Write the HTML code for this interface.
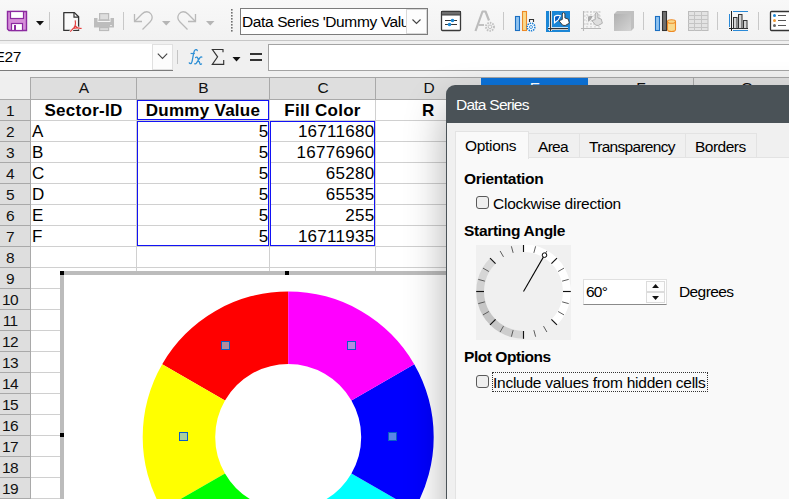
<!DOCTYPE html>
<html><head><meta charset="utf-8">
<style>
*{box-sizing:border-box;margin:0;padding:0}
html,body{width:789px;height:499px;overflow:hidden;background:#f0f0f0;font-family:"Liberation Sans",sans-serif;color:#000;position:relative}
.a{position:absolute}
.t{position:absolute;white-space:nowrap}
</style></head><body>
<div class="a" style="left:0;top:0;width:789px;height:40px;background:linear-gradient(#f8f8f8,#f2f2f2)"></div>
<div class="a" style="left:0;top:40px;width:789px;height:1px;background:#c6c6c6"></div>
<div class="a" style="left:0;top:41px;width:789px;height:36px;background:#f0f0f0"></div>

<svg class="a" style="left:0;top:0" width="789" height="40" viewBox="0 0 789 40">
 <!-- save -->
 <path d="M7.5 11.5h19v19h-17.5l-1.5-1.5z" fill="#d68fd9" stroke="#8c2aa0" stroke-width="1.4"/>
 <rect x="10.5" y="11.5" width="13" height="7" fill="#fff" stroke="#8c2aa0" stroke-width="1.2"/>
 <rect x="11.5" y="23.5" width="11" height="7" fill="#fff" stroke="#8c2aa0" stroke-width="1.2"/>
 <rect x="14" y="25" width="2" height="5" fill="#8c2aa0"/>
 <path d="M36 21h8l-4 4.5z" fill="#111"/>
 <rect x="49" y="12" width="1" height="18" fill="#c8c8c8"/>
 <!-- pdf -->
 <path d="M63.8 12.6H74.4L78.6 16.8V30.4H63.8Z" fill="#fafafa" stroke="#333" stroke-width="1.3" stroke-linejoin="round"/>
 <path d="M74 12.6V17.2H78.6" fill="none" stroke="#333" stroke-width="1.2"/>
 <path d="M75.2 20.3C75.8 23.5 75.5 25.8 73.8 27.8L70.2 31.6M75.2 25.8C76.5 27.6 79 28.6 81.6 28.4M72.6 28.6C75 27.8 77.5 27.6 80.5 28.3" fill="none" stroke="#f4f4f4" stroke-width="2.6"/>
 <path d="M75.2 20.3C75.8 23.5 75.5 25.8 73.8 27.8L70.2 31.6M75.2 25.8C76.5 27.6 79 28.6 81.6 28.4M72.6 28.6C75 27.8 77.5 27.6 80.5 28.3" fill="none" stroke="#e53b3b" stroke-width="1.1"/>
 <!-- printer -->
 <path d="M94 18h3.5v4h13v-4h3.5v9.5h-20z" fill="#bdbdbd"/>
 <rect x="99.6" y="13.6" width="9" height="6.4" fill="#dedede" stroke="#bbb" stroke-width="1.2"/>
 <rect x="98.2" y="19.6" width="11.6" height="1.2" fill="#bbb"/>
 <rect x="99.6" y="27.6" width="9" height="2.9" fill="#dedede" stroke="#bbb" stroke-width="1.2"/>
 <rect x="110" y="25" width="2" height="1" fill="#e6e6e6"/>
 <rect x="123" y="12" width="1" height="18" fill="#c8c8c8"/>
 <!-- undo -->
 <path d="M134.5 14v7.5h7.5" fill="none" stroke="#b9b9b9" stroke-width="1.3"/>
 <path d="M134.8 21.2L142 14c3-3 7-3 9 0c2 3 1 6-1 8l-7.5 7.5" fill="none" stroke="#b9b9b9" stroke-width="1.3"/>
 <path d="M162 21h8.5l-4.25 4.5z" fill="#b5b5b5"/>
 <!-- redo -->
 <path d="M195.5 14v7.5h-7.5" fill="none" stroke="#b9b9b9" stroke-width="1.3"/>
 <path d="M195.2 21.2L188 14c-3-3-7-3-9 0c-2 3-1 6 1 8l7.5 7.5" fill="none" stroke="#b9b9b9" stroke-width="1.3"/>
 <path d="M206 21h8.5l-4.25 4.5z" fill="#b5b5b5"/>
 <!-- grip -->
 <g fill="#707070"><rect x="231" y="9" width="1.6" height="1.6"/><rect x="231" y="12" width="1.6" height="1.6"/><rect x="231" y="15" width="1.6" height="1.6"/><rect x="231" y="18" width="1.6" height="1.6"/><rect x="231" y="21" width="1.6" height="1.6"/><rect x="231" y="24" width="1.6" height="1.6"/><rect x="231" y="27" width="1.6" height="1.6"/><rect x="231" y="30" width="1.6" height="1.6"/></g>
 <!-- format selection -->
 <rect x="441.5" y="11.5" width="19" height="19" rx="1" fill="#fff" stroke="#3a3a3a" stroke-width="1.3"/>
 <rect x="441.5" y="11.5" width="19" height="3.5" fill="#6d6d6d" stroke="#3a3a3a" stroke-width="1"/>
 <path d="M445 20.5h12M445 24.5h12" stroke="#333" stroke-width="1.1"/>
 <circle cx="452.5" cy="20.5" r="1.8" fill="#1e8ad6"/>
 <circle cx="449.5" cy="24.5" r="1.8" fill="#1e8ad6"/>
 <!-- font A -->
 <path d="M475.5 31l7-19.5h3l3.5 9" fill="none" stroke="#bcbcbc" stroke-width="2.2" stroke-linejoin="round"/>
 <path d="M478.5 25h5.5" stroke="#bcbcbc" stroke-width="1.8"/>
 <circle cx="490" cy="26.8" r="4" fill="#f4f4f4" stroke="#c2c2c2" stroke-width="2" stroke-dasharray="1.5 1.1"/>
 <circle cx="490" cy="26.8" r="1.8" fill="none" stroke="#c2c2c2" stroke-width="1"/>
 <rect x="503" y="12" width="1" height="18" fill="#c8c8c8"/>
 <!-- chart type -->
 <rect x="515.5" y="16.5" width="4" height="14" fill="#8ec3f0" stroke="#1b6fc2" stroke-width="1.1"/>
 <rect x="522.5" y="11.5" width="4" height="19" fill="#f8d98c" stroke="#ee8a25" stroke-width="1.1"/>
 <path d="M529.5 22v-2.5h4v2.5" fill="none" stroke="#333" stroke-width="1.1"/>
 <circle cx="531" cy="27" r="3.8" fill="#fff" stroke="#1b7fd6" stroke-width="1.6" stroke-dasharray="1.4 0.9"/>
 <circle cx="531" cy="27" r="1.5" fill="none" stroke="#1b7fd6" stroke-width="0.8"/>
 <!-- chart wall selected -->
 <rect x="546" y="11" width="24" height="21" fill="#1b86d6"/>
 <path d="M550.6 11v20M548 28.6h20" stroke="#fff" stroke-width="2.8"/>
 <path d="M550.6 11v20M548 28.6h20" stroke="#333" stroke-width="1.1"/>
 <path d="M554.5 22.8v-6.3c1.5-1.2 4-1.3 6-.8l-2.5 4.5z" fill="#0a5cc0" stroke="#fff" stroke-width="1.1"/>
 <path d="M562.3 19.5v-5.5c0-1.8 2.6-1.8 2.6 0v4l3.3 1 1.2 4.2-4.2 2.3-2.5-.3-3.8-4.5z" fill="#fff" stroke="#333" stroke-width="0.9" stroke-linejoin="round"/>
 <!-- grid wall disabled -->
 <g stroke="#c6c6c6" stroke-width="1" fill="none" stroke-dasharray="1.6 1.4">
  <path d="M587 11v17M591 11v17M595 11v17M599 11v17M584 12h17M584 16h17M584 20h17M584 24h17"/>
 </g>
 <path d="M583.5 11v20M581 28.5h20" stroke="#b8b8b8" stroke-width="1.1"/>
 <path d="M587.5 22.8v-6.3c1.5-1.2 4-1.3 6-.8l-2.5 4.5z" fill="#ababab" stroke="#f2f2f2" stroke-width="1"/>
 <path d="M595.3 19.5v-5.5c0-1.8 2.6-1.8 2.6 0v4l3.3 1 1.2 4.2-4.2 2.3-2.5-.3-3.8-4.5z" fill="#dedede" stroke="#acacac" stroke-width="0.9" stroke-linejoin="round"/>
 <!-- 3d cube -->
 <path d="M614 14l3-3h17v17l-3 3h-17z" fill="#c0c0c0"/>
 <path d="M614 14h17v17h-17z" fill="url(#cubeg)"/>
 <defs><linearGradient id="cubeg" x1="0" y1="0" x2="1" y2="1"><stop offset="0" stop-color="#b0b0b0"/><stop offset="1" stop-color="#d4d4d4"/></linearGradient></defs>
 <rect x="643" y="12" width="1" height="18" fill="#c8c8c8"/>
 <!-- chart data -->
 <rect x="655.5" y="16.5" width="4" height="14" fill="#8ec3f0" stroke="#1b6fc2" stroke-width="1.1"/>
 <rect x="662.5" y="11.5" width="4" height="19" fill="#6f6f6f" stroke="#333" stroke-width="1.1"/>
 <path d="M667.5 21.5v8c0 1.2 2 2 4 2s4-.8 4-2v-8" fill="#f8d98c" stroke="#ee8a25" stroke-width="1.1"/>
 <ellipse cx="671.5" cy="21.5" rx="4" ry="1.8" fill="#f8d98c" stroke="#ee8a25" stroke-width="1.1"/>
 <!-- data table -->
 <rect x="688.5" y="11.5" width="19.5" height="19" fill="#e3e3e3" stroke="#bcbcbc" stroke-width="1"/>
 <path d="M688 15.5h20M688 19.5h20M688 23.5h20M688 27.5h20M694.5 11v20M701.5 11v20" stroke="#c4c4c4" stroke-width="1"/>
 <rect x="717" y="12" width="1" height="18" fill="#c8c8c8"/>
 <!-- axis -->
 <path d="M733 11.5h15M733 30.5h15M729.5 14v13" stroke="#2a8ad8" stroke-width="1"/>
 <path d="M731.5 11v20M729 28.5h19" stroke="#222" stroke-width="1"/>
 <rect x="733.5" y="17.5" width="3.5" height="11" fill="#d4d4d4" stroke="#333" stroke-width="1"/>
 <rect x="738.5" y="14.5" width="3.5" height="14" fill="#d4d4d4" stroke="#333" stroke-width="1"/>
 <rect x="743.5" y="20.5" width="3.5" height="8" fill="#d4d4d4" stroke="#333" stroke-width="1"/>
 <rect x="758" y="12" width="1" height="18" fill="#c8c8c8"/>
 <!-- legend -->
 <rect x="770.5" y="11.5" width="25" height="19" rx="1" fill="#fff" stroke="#333" stroke-width="1.3"/>
 <circle cx="774.5" cy="15.5" r="1.5" fill="#1e88d8"/><circle cx="774.5" cy="20.5" r="1.5" fill="#f39b35"/><circle cx="774.5" cy="25.5" r="1.5" fill="#666"/>
 <path d="M778 15.5h8M778 20.5h8M778 25.5h8" stroke="#555" stroke-width="1"/>
</svg>
<div class="a" style="left:240px;top:8px;width:188px;height:27px;background:#fff;border:1px solid #7c7c7c"></div>
<div class="t" style="left:242px;top:9px;width:164px;height:25px;overflow:hidden;font-size:15.5px;letter-spacing:-0.38px;line-height:25px">Data Series 'Dummy Values'</div>
<div class="a" style="left:406px;top:9px;width:21px;height:25px;background:#fdfdfd;border:1px solid #d8d8d8"></div>
<svg class="a" style="left:406px;top:9px" width="21" height="25"><path d="M6.5 10.5l4 4 4-4" fill="none" stroke="#444" stroke-width="1.1"/></svg>
<div class="a" style="left:-10px;top:44px;width:183px;height:27px;background:#fff;border-bottom:1px solid #7c7c7c"></div>
<div class="t" style="left:-5.5px;top:44px;font-size:15.5px;letter-spacing:-0.3px;line-height:26px">E27</div>
<div class="a" style="left:152px;top:44px;width:21px;height:26px;background:#fcfcfc;border:1px solid #e0e0e0"></div>
<svg class="a" style="left:152px;top:44px" width="21" height="26"><path d="M5.8 9.7l4.7 4.7 4.7-4.7" fill="none" stroke="#444" stroke-width="1.1"/></svg>
<div class="a" style="left:177px;top:50px;width:1px;height:14px;background:#c4c4c4"></div>
<svg class="a" style="left:184px;top:45px" width="44" height="24" viewBox="184 45 44 24"><path d="M197.3 50.6c-.3-.9-1.3-1.2-2-.8-.9.5-1.3 1.6-1.6 3.2l-1.6 8.4c-.3 1.5-.9 2.3-1.7 2.3-.6 0-.9-.4-1.1-.8" fill="none" stroke="#2d8fd5" stroke-width="1.3" stroke-linecap="round"/><path d="M190.6 53.5h4.2" stroke="#2d8fd5" stroke-width="1.2"/><path d="M195.6 57.5c.8-.6 1.6-.5 2 .3l2.3 5.8c.4.8 1 .9 1.6.4M201.8 57.1c-.6-.4-1.2-.2-1.8.5l-3.6 5.6c-.5.7-1 .9-1.6.6" fill="none" stroke="#2d8fd5" stroke-width="1.3" stroke-linecap="round"/><path d="M223 52.3v-2.8h-10.6l5.2 7.3-5.3 7.6h11.4v-4.5" fill="none" stroke="#333" stroke-width="1.15"/></svg>
<svg class="a" style="left:230px;top:50px" width="40" height="20"><path d="M2.5 7h8l-4 4.5z" fill="#111"/><path d="M20 4h12M20 10h12" stroke="#333" stroke-width="2"/></svg>
<div class="a" style="left:268px;top:44px;width:530px;height:27px;background:#fff;border:1px solid #a3a3a3"></div>
<div class="a" style="left:0;top:77px;width:789px;height:422px;background:#fff"></div>
<div class="a" style="left:30px;top:77px;width:789px;height:1px;background:#a5a5a5"></div>
<div class="a" style="left:0;top:77px;width:30px;height:1px;background:#efefef"></div>
<div class="a" style="left:0;top:78px;width:30px;height:21px;background:#efefef"></div>
<div class="a" style="left:31px;top:78px;width:105px;height:21px;background:#dedede"></div>
<div class="t" style="left:31px;top:77px;width:106px;text-align:center;font-size:15.5px;line-height:21px;color:#111">A</div>
<div class="a" style="left:137px;top:78px;width:132px;height:21px;background:#dedede"></div>
<div class="t" style="left:137px;top:77px;width:133px;text-align:center;font-size:15.5px;line-height:21px;color:#111">B</div>
<div class="a" style="left:270px;top:78px;width:105px;height:21px;background:#dedede"></div>
<div class="t" style="left:270px;top:77px;width:106px;text-align:center;font-size:15.5px;line-height:21px;color:#111">C</div>
<div class="a" style="left:376px;top:78px;width:105px;height:21px;background:#dedede"></div>
<div class="t" style="left:376px;top:77px;width:106px;text-align:center;font-size:15.5px;line-height:21px;color:#111">D</div>
<div class="a" style="left:481px;top:78px;width:107px;height:21px;background:#0c72d8"></div>
<div class="t" style="left:482px;top:77px;width:106px;text-align:center;font-size:15.5px;line-height:21px;color:#fff">E</div>
<div class="a" style="left:588px;top:78px;width:105px;height:21px;background:#dedede"></div>
<div class="t" style="left:588px;top:77px;width:106px;text-align:center;font-size:15.5px;line-height:21px;color:#111">F</div>
<div class="a" style="left:694px;top:78px;width:105px;height:21px;background:#dedede"></div>
<div class="t" style="left:694px;top:77px;width:106px;text-align:center;font-size:15.5px;line-height:21px;color:#111">G</div>
<div class="a" style="left:30px;top:78px;width:1px;height:21px;background:#a9a9a9"></div>
<div class="a" style="left:136px;top:78px;width:1px;height:21px;background:#a9a9a9"></div>
<div class="a" style="left:269px;top:78px;width:1px;height:21px;background:#a9a9a9"></div>
<div class="a" style="left:375px;top:78px;width:1px;height:21px;background:#a9a9a9"></div>
<div class="a" style="left:693px;top:78px;width:1px;height:21px;background:#a9a9a9"></div>
<div class="a" style="left:799px;top:78px;width:1px;height:21px;background:#a9a9a9"></div>
<div class="a" style="left:0;top:99px;width:789px;height:1px;background:#a9a9a9"></div>
<div class="a" style="left:0;top:100px;width:30px;height:20px;background:#dedede"></div>
<div class="t" style="left:-10px;top:101px;width:40px;text-align:center;font-size:15.5px;letter-spacing:-0.7px;line-height:20px;color:#111">1</div>
<div class="a" style="left:0;top:120px;width:30px;height:1px;background:#a9a9a9"></div>
<div class="a" style="left:31px;top:120px;width:760px;height:1px;background:#d0d0d0"></div>
<div class="a" style="left:0;top:121px;width:30px;height:20px;background:#dedede"></div>
<div class="t" style="left:-10px;top:122px;width:40px;text-align:center;font-size:15.5px;letter-spacing:-0.7px;line-height:20px;color:#111">2</div>
<div class="a" style="left:0;top:141px;width:30px;height:1px;background:#a9a9a9"></div>
<div class="a" style="left:31px;top:141px;width:760px;height:1px;background:#d0d0d0"></div>
<div class="a" style="left:0;top:142px;width:30px;height:20px;background:#dedede"></div>
<div class="t" style="left:-10px;top:143px;width:40px;text-align:center;font-size:15.5px;letter-spacing:-0.7px;line-height:20px;color:#111">3</div>
<div class="a" style="left:0;top:162px;width:30px;height:1px;background:#a9a9a9"></div>
<div class="a" style="left:31px;top:162px;width:760px;height:1px;background:#d0d0d0"></div>
<div class="a" style="left:0;top:163px;width:30px;height:20px;background:#dedede"></div>
<div class="t" style="left:-10px;top:164px;width:40px;text-align:center;font-size:15.5px;letter-spacing:-0.7px;line-height:20px;color:#111">4</div>
<div class="a" style="left:0;top:183px;width:30px;height:1px;background:#a9a9a9"></div>
<div class="a" style="left:31px;top:183px;width:760px;height:1px;background:#d0d0d0"></div>
<div class="a" style="left:0;top:184px;width:30px;height:20px;background:#dedede"></div>
<div class="t" style="left:-10px;top:185px;width:40px;text-align:center;font-size:15.5px;letter-spacing:-0.7px;line-height:20px;color:#111">5</div>
<div class="a" style="left:0;top:204px;width:30px;height:1px;background:#a9a9a9"></div>
<div class="a" style="left:31px;top:204px;width:760px;height:1px;background:#d0d0d0"></div>
<div class="a" style="left:0;top:205px;width:30px;height:20px;background:#dedede"></div>
<div class="t" style="left:-10px;top:206px;width:40px;text-align:center;font-size:15.5px;letter-spacing:-0.7px;line-height:20px;color:#111">6</div>
<div class="a" style="left:0;top:225px;width:30px;height:1px;background:#a9a9a9"></div>
<div class="a" style="left:31px;top:225px;width:760px;height:1px;background:#d0d0d0"></div>
<div class="a" style="left:0;top:226px;width:30px;height:20px;background:#dedede"></div>
<div class="t" style="left:-10px;top:227px;width:40px;text-align:center;font-size:15.5px;letter-spacing:-0.7px;line-height:20px;color:#111">7</div>
<div class="a" style="left:0;top:246px;width:30px;height:1px;background:#a9a9a9"></div>
<div class="a" style="left:31px;top:246px;width:760px;height:1px;background:#d0d0d0"></div>
<div class="a" style="left:0;top:247px;width:30px;height:20px;background:#dedede"></div>
<div class="t" style="left:-10px;top:248px;width:40px;text-align:center;font-size:15.5px;letter-spacing:-0.7px;line-height:20px;color:#111">8</div>
<div class="a" style="left:0;top:267px;width:30px;height:1px;background:#a9a9a9"></div>
<div class="a" style="left:31px;top:267px;width:760px;height:1px;background:#d0d0d0"></div>
<div class="a" style="left:0;top:268px;width:30px;height:20px;background:#dedede"></div>
<div class="t" style="left:-10px;top:269px;width:40px;text-align:center;font-size:15.5px;letter-spacing:-0.7px;line-height:20px;color:#111">9</div>
<div class="a" style="left:0;top:288px;width:30px;height:1px;background:#a9a9a9"></div>
<div class="a" style="left:31px;top:288px;width:760px;height:1px;background:#d0d0d0"></div>
<div class="a" style="left:0;top:289px;width:30px;height:20px;background:#dedede"></div>
<div class="t" style="left:-10px;top:290px;width:40px;text-align:center;font-size:15.5px;letter-spacing:-0.7px;line-height:20px;color:#111">10</div>
<div class="a" style="left:0;top:309px;width:30px;height:1px;background:#a9a9a9"></div>
<div class="a" style="left:31px;top:309px;width:760px;height:1px;background:#d0d0d0"></div>
<div class="a" style="left:0;top:310px;width:30px;height:20px;background:#dedede"></div>
<div class="t" style="left:-10px;top:311px;width:40px;text-align:center;font-size:15.5px;letter-spacing:-0.7px;line-height:20px;color:#111">11</div>
<div class="a" style="left:0;top:330px;width:30px;height:1px;background:#a9a9a9"></div>
<div class="a" style="left:31px;top:330px;width:760px;height:1px;background:#d0d0d0"></div>
<div class="a" style="left:0;top:331px;width:30px;height:20px;background:#dedede"></div>
<div class="t" style="left:-10px;top:332px;width:40px;text-align:center;font-size:15.5px;letter-spacing:-0.7px;line-height:20px;color:#111">12</div>
<div class="a" style="left:0;top:351px;width:30px;height:1px;background:#a9a9a9"></div>
<div class="a" style="left:31px;top:351px;width:760px;height:1px;background:#d0d0d0"></div>
<div class="a" style="left:0;top:352px;width:30px;height:20px;background:#dedede"></div>
<div class="t" style="left:-10px;top:353px;width:40px;text-align:center;font-size:15.5px;letter-spacing:-0.7px;line-height:20px;color:#111">13</div>
<div class="a" style="left:0;top:372px;width:30px;height:1px;background:#a9a9a9"></div>
<div class="a" style="left:31px;top:372px;width:760px;height:1px;background:#d0d0d0"></div>
<div class="a" style="left:0;top:373px;width:30px;height:20px;background:#dedede"></div>
<div class="t" style="left:-10px;top:374px;width:40px;text-align:center;font-size:15.5px;letter-spacing:-0.7px;line-height:20px;color:#111">14</div>
<div class="a" style="left:0;top:393px;width:30px;height:1px;background:#a9a9a9"></div>
<div class="a" style="left:31px;top:393px;width:760px;height:1px;background:#d0d0d0"></div>
<div class="a" style="left:0;top:394px;width:30px;height:20px;background:#dedede"></div>
<div class="t" style="left:-10px;top:395px;width:40px;text-align:center;font-size:15.5px;letter-spacing:-0.7px;line-height:20px;color:#111">15</div>
<div class="a" style="left:0;top:414px;width:30px;height:1px;background:#a9a9a9"></div>
<div class="a" style="left:31px;top:414px;width:760px;height:1px;background:#d0d0d0"></div>
<div class="a" style="left:0;top:415px;width:30px;height:20px;background:#dedede"></div>
<div class="t" style="left:-10px;top:416px;width:40px;text-align:center;font-size:15.5px;letter-spacing:-0.7px;line-height:20px;color:#111">16</div>
<div class="a" style="left:0;top:435px;width:30px;height:1px;background:#a9a9a9"></div>
<div class="a" style="left:31px;top:435px;width:760px;height:1px;background:#d0d0d0"></div>
<div class="a" style="left:0;top:436px;width:30px;height:20px;background:#dedede"></div>
<div class="t" style="left:-10px;top:437px;width:40px;text-align:center;font-size:15.5px;letter-spacing:-0.7px;line-height:20px;color:#111">17</div>
<div class="a" style="left:0;top:456px;width:30px;height:1px;background:#a9a9a9"></div>
<div class="a" style="left:31px;top:456px;width:760px;height:1px;background:#d0d0d0"></div>
<div class="a" style="left:0;top:457px;width:30px;height:20px;background:#dedede"></div>
<div class="t" style="left:-10px;top:458px;width:40px;text-align:center;font-size:15.5px;letter-spacing:-0.7px;line-height:20px;color:#111">18</div>
<div class="a" style="left:0;top:477px;width:30px;height:1px;background:#a9a9a9"></div>
<div class="a" style="left:31px;top:477px;width:760px;height:1px;background:#d0d0d0"></div>
<div class="a" style="left:0;top:478px;width:30px;height:20px;background:#dedede"></div>
<div class="t" style="left:-10px;top:479px;width:40px;text-align:center;font-size:15.5px;letter-spacing:-0.7px;line-height:20px;color:#111">19</div>
<div class="a" style="left:0;top:498px;width:30px;height:1px;background:#a9a9a9"></div>
<div class="a" style="left:31px;top:498px;width:760px;height:1px;background:#d0d0d0"></div>
<div class="a" style="left:0;top:499px;width:30px;height:20px;background:#dedede"></div>
<div class="t" style="left:-10px;top:500px;width:40px;text-align:center;font-size:15.5px;letter-spacing:-0.7px;line-height:20px;color:#111">20</div>
<div class="a" style="left:0;top:519px;width:30px;height:1px;background:#a9a9a9"></div>
<div class="a" style="left:31px;top:519px;width:760px;height:1px;background:#d0d0d0"></div>
<div class="a" style="left:30px;top:99px;width:1px;height:400px;background:#a9a9a9"></div>
<div class="a" style="left:136px;top:100px;width:1px;height:400px;background:#d0d0d0"></div>
<div class="a" style="left:269px;top:100px;width:1px;height:400px;background:#d0d0d0"></div>
<div class="a" style="left:375px;top:100px;width:1px;height:400px;background:#d0d0d0"></div>
<div class="a" style="left:481px;top:100px;width:1px;height:400px;background:#d0d0d0"></div>
<div class="a" style="left:587px;top:100px;width:1px;height:400px;background:#d0d0d0"></div>
<div class="a" style="left:693px;top:100px;width:1px;height:400px;background:#d0d0d0"></div>
<div class="a" style="left:799px;top:100px;width:1px;height:400px;background:#d0d0d0"></div>
<div class="t" style="left:31px;top:100px;width:105px;height:21px;text-align:center;font-size:17px;letter-spacing:0.28px;font-weight:bold;line-height:21px;">Sector-ID</div>
<div class="t" style="left:137px;top:100px;width:132px;height:21px;text-align:center;font-size:17px;letter-spacing:0.28px;font-weight:bold;line-height:21px;">Dummy Value</div>
<div class="t" style="left:270px;top:100px;width:105px;height:21px;text-align:center;font-size:17px;letter-spacing:0.28px;font-weight:bold;line-height:21px;">Fill Color</div>
<div class="t" style="left:422px;top:100px;font-size:17px;font-weight:bold;line-height:21px">R</div>
<div class="t" style="left:31px;top:121px;width:105px;height:21px;text-align:left;font-size:17px;letter-spacing:0.28px;font-weight:normal;line-height:21px;padding-left:1px">A</div>
<div class="t" style="left:137px;top:121px;width:132px;height:21px;text-align:right;font-size:17px;letter-spacing:0.28px;font-weight:normal;line-height:21px;padding-right:0.5px">5</div>
<div class="t" style="left:270px;top:121px;width:105px;height:21px;text-align:right;font-size:17px;letter-spacing:0.28px;font-weight:normal;line-height:21px;padding-right:0.5px">16711680</div>
<div class="t" style="left:31px;top:142px;width:105px;height:21px;text-align:left;font-size:17px;letter-spacing:0.28px;font-weight:normal;line-height:21px;padding-left:1px">B</div>
<div class="t" style="left:137px;top:142px;width:132px;height:21px;text-align:right;font-size:17px;letter-spacing:0.28px;font-weight:normal;line-height:21px;padding-right:0.5px">5</div>
<div class="t" style="left:270px;top:142px;width:105px;height:21px;text-align:right;font-size:17px;letter-spacing:0.28px;font-weight:normal;line-height:21px;padding-right:0.5px">16776960</div>
<div class="t" style="left:31px;top:163px;width:105px;height:21px;text-align:left;font-size:17px;letter-spacing:0.28px;font-weight:normal;line-height:21px;padding-left:1px">C</div>
<div class="t" style="left:137px;top:163px;width:132px;height:21px;text-align:right;font-size:17px;letter-spacing:0.28px;font-weight:normal;line-height:21px;padding-right:0.5px">5</div>
<div class="t" style="left:270px;top:163px;width:105px;height:21px;text-align:right;font-size:17px;letter-spacing:0.28px;font-weight:normal;line-height:21px;padding-right:0.5px">65280</div>
<div class="t" style="left:31px;top:184px;width:105px;height:21px;text-align:left;font-size:17px;letter-spacing:0.28px;font-weight:normal;line-height:21px;padding-left:1px">D</div>
<div class="t" style="left:137px;top:184px;width:132px;height:21px;text-align:right;font-size:17px;letter-spacing:0.28px;font-weight:normal;line-height:21px;padding-right:0.5px">5</div>
<div class="t" style="left:270px;top:184px;width:105px;height:21px;text-align:right;font-size:17px;letter-spacing:0.28px;font-weight:normal;line-height:21px;padding-right:0.5px">65535</div>
<div class="t" style="left:31px;top:205px;width:105px;height:21px;text-align:left;font-size:17px;letter-spacing:0.28px;font-weight:normal;line-height:21px;padding-left:1px">E</div>
<div class="t" style="left:137px;top:205px;width:132px;height:21px;text-align:right;font-size:17px;letter-spacing:0.28px;font-weight:normal;line-height:21px;padding-right:0.5px">5</div>
<div class="t" style="left:270px;top:205px;width:105px;height:21px;text-align:right;font-size:17px;letter-spacing:0.28px;font-weight:normal;line-height:21px;padding-right:0.5px">255</div>
<div class="t" style="left:31px;top:226px;width:105px;height:21px;text-align:left;font-size:17px;letter-spacing:0.28px;font-weight:normal;line-height:21px;padding-left:1px">F</div>
<div class="t" style="left:137px;top:226px;width:132px;height:21px;text-align:right;font-size:17px;letter-spacing:0.28px;font-weight:normal;line-height:21px;padding-right:0.5px">5</div>
<div class="t" style="left:270px;top:226px;width:105px;height:21px;text-align:right;font-size:17px;letter-spacing:0.28px;font-weight:normal;line-height:21px;padding-right:0.5px">16711935</div>
<div class="a" style="left:137px;top:100px;width:132px;height:20px;border:1px solid #1212f6"></div>
<div class="a" style="left:137px;top:121px;width:132px;height:125px;border:1px solid #1212f6"></div>
<div class="a" style="left:270px;top:121px;width:105px;height:125px;border:1px solid #1212f6"></div>
<div class="a" style="left:60px;top:271px;width:454px;height:330px;background:#fff;border:4px solid #bcbcbc"></div>
<div class="a" style="left:60px;top:271px;width:4px;height:4px;background:#000"></div>
<div class="a" style="left:285px;top:271px;width:4px;height:4px;background:#000"></div>
<div class="a" style="left:60px;top:433px;width:4px;height:4px;background:#000"></div>
<svg class="a" style="left:0;top:0" width="789" height="499"><path d="M288.20 291.40A145.5 145.5 0 0 0 162.19 364.15L224.98 400.40A73.0 73.0 0 0 1 288.20 363.90Z" fill="#ff0000"/><path d="M162.19 364.15A145.5 145.5 0 0 0 162.19 509.65L224.98 473.40A73.0 73.0 0 0 1 224.98 400.40Z" fill="#ffff00"/><path d="M162.19 509.65A145.5 145.5 0 0 0 288.20 582.40L288.20 509.90A73.0 73.0 0 0 1 224.98 473.40Z" fill="#00ff00"/><path d="M288.20 582.40A145.5 145.5 0 0 0 414.21 509.65L351.42 473.40A73.0 73.0 0 0 1 288.20 509.90Z" fill="#00ffff"/><path d="M414.21 509.65A145.5 145.5 0 0 0 414.21 364.15L351.42 400.40A73.0 73.0 0 0 1 351.42 473.40Z" fill="#0000ff"/><path d="M414.21 364.15A145.5 145.5 0 0 0 288.20 291.40L288.20 363.90A73.0 73.0 0 0 1 351.42 400.40Z" fill="#ff00ff"/><g stroke="#0b5ec6" stroke-width="1"><rect x="221.5" y="341.5" width="8" height="8" fill="#b48c9c"/><rect x="347.5" y="341.5" width="8" height="8" fill="#b488e0"/><rect x="179.5" y="432.5" width="8" height="8" fill="#aacf9e"/><rect x="388.5" y="432.5" width="8" height="8" fill="#5a84e8"/></g></svg>
<div class="a" style="left:446px;top:85px;width:400px;height:450px;background:#4a5257;border-radius:9px 0 0 0;box-shadow:0 20px 42px rgba(0,0,0,0.32)"></div>
<div class="a" style="left:447px;top:123px;width:400px;height:400px;background:#f0f0f0"></div>
<div class="t" style="left:456px;top:94px;font-size:15.5px;letter-spacing:-0.75px;line-height:22px;color:#fff">Data Series</div>
<div class="a" style="left:455px;top:157px;width:400px;height:400px;background:#f9f9f9;border:1px solid #e3e3e3"></div>
<div class="a" style="left:528px;top:133px;width:52px;height:25px;background:#f0f0f0;border:1px solid #e3e3e3"></div>
<div class="t" style="letter-spacing:-0.7px;left:538px;top:136px;font-size:15.5px;line-height:22px">Area</div>
<div class="a" style="left:579px;top:133px;width:107px;height:25px;background:#f0f0f0;border:1px solid #e3e3e3"></div>
<div class="t" style="letter-spacing:-0.7px;left:589px;top:136px;font-size:15.5px;line-height:22px">Transparency</div>
<div class="a" style="left:685px;top:133px;width:72px;height:25px;background:#f0f0f0;border:1px solid #e3e3e3"></div>
<div class="t" style="letter-spacing:-0.5px;left:695px;top:136px;font-size:15.5px;line-height:22px">Borders</div>
<div class="a" style="left:455px;top:131px;width:74px;height:28px;background:#f9f9f9;border:1px solid #e3e3e3;border-bottom:none"></div>
<div class="t" style="letter-spacing:-0.3px;left:465px;top:135px;font-size:15.5px;line-height:22px">Options</div>
<div class="t" style="left:464px;top:168px;font-size:15.5px;letter-spacing:-0.3px;font-weight:bold;line-height:22px">Orientation</div>
<div class="a" style="left:476px;top:196px;width:13px;height:13px;border:1px solid #5a5a5a;border-radius:3px;background:#efefef"></div>
<div class="t" style="left:493px;top:192.5px;font-size:15.5px;letter-spacing:-0.25px;line-height:22px">Clockwise direction</div>
<div class="t" style="left:464px;top:220px;font-size:15.5px;letter-spacing:-0.3px;font-weight:bold;line-height:22px">Starting Angle</div>
<svg class="a" style="left:476px;top:245px" width="95" height="95" viewBox="0 0 95 95"><rect width="95" height="95" fill="#f0f0f0"/><path d="M80.95 79.95A47.3 47.3 0 0 0 47.50 -0.80L47.50 7.00A39.5 39.5 0 0 1 75.43 74.43Z" fill="#ffffff"/><path d="M14.23 12.88A47.3 47.3 0 0 0 6.41 23.06L13.19 26.93A39.5 39.5 0 0 1 19.72 18.42Z" fill="#d9d9d9"/><path d="M6.66 22.64A47.3 47.3 0 0 0 1.75 34.50L9.29 36.48A39.5 39.5 0 0 1 13.40 26.57Z" fill="#d6d6d6"/><path d="M1.88 34.02A47.3 47.3 0 0 0 0.20 46.75L8.00 46.71A39.5 39.5 0 0 1 9.40 36.08Z" fill="#d2d2d2"/><path d="M0.20 46.25A47.3 47.3 0 0 0 1.88 58.98L9.40 56.92A39.5 39.5 0 0 1 8.00 46.29Z" fill="#c9c9c9"/><path d="M1.75 58.50A47.3 47.3 0 0 0 6.66 70.36L13.40 66.43A39.5 39.5 0 0 1 9.29 56.52Z" fill="#c6c6c6"/><path d="M6.41 69.94A47.3 47.3 0 0 0 14.23 80.12L19.72 74.58A39.5 39.5 0 0 1 13.19 66.07Z" fill="#c4c4c4"/><path d="M13.88 79.77A47.3 47.3 0 0 0 24.06 87.59L27.93 80.81A39.5 39.5 0 0 1 19.42 74.28Z" fill="#c7c7c7"/><path d="M23.64 87.34A47.3 47.3 0 0 0 35.50 92.25L37.48 84.71A39.5 39.5 0 0 1 27.57 80.60Z" fill="#cdcdcd"/><path d="M35.02 92.12A47.3 47.3 0 0 0 47.75 93.80L47.71 86.00A39.5 39.5 0 0 1 37.08 84.60Z" fill="#d5d5d5"/><line x1="87.00" y1="46.50" x2="94.80" y2="46.50" stroke="#111" stroke-width="1.15"/><line x1="86.14" y1="36.15" x2="92.71" y2="34.39" stroke="#555" stroke-width="0.95"/><line x1="82.14" y1="26.50" x2="88.03" y2="23.10" stroke="#555" stroke-width="0.95"/><line x1="75.43" y1="18.57" x2="80.95" y2="13.05" stroke="#111" stroke-width="1.15"/><line x1="67.50" y1="11.86" x2="70.90" y2="5.97" stroke="#555" stroke-width="0.95"/><line x1="57.85" y1="7.86" x2="59.61" y2="1.29" stroke="#555" stroke-width="0.95"/><line x1="47.50" y1="7.00" x2="47.50" y2="-0.80" stroke="#111" stroke-width="1.15"/><line x1="37.15" y1="7.86" x2="35.39" y2="1.29" stroke="#555" stroke-width="0.95"/><line x1="27.50" y1="11.86" x2="24.10" y2="5.97" stroke="#555" stroke-width="0.95"/><line x1="19.57" y1="18.57" x2="14.05" y2="13.05" stroke="#111" stroke-width="1.15"/><line x1="12.86" y1="26.50" x2="6.97" y2="23.10" stroke="#555" stroke-width="0.95"/><line x1="8.86" y1="36.15" x2="2.29" y2="34.39" stroke="#555" stroke-width="0.95"/><line x1="8.00" y1="46.50" x2="0.20" y2="46.50" stroke="#111" stroke-width="1.15"/><line x1="8.86" y1="56.85" x2="2.29" y2="58.61" stroke="#555" stroke-width="0.95"/><line x1="12.86" y1="66.50" x2="6.97" y2="69.90" stroke="#555" stroke-width="0.95"/><line x1="19.57" y1="74.43" x2="14.05" y2="79.95" stroke="#111" stroke-width="1.15"/><line x1="27.50" y1="81.14" x2="24.10" y2="87.03" stroke="#555" stroke-width="0.95"/><line x1="37.15" y1="85.14" x2="35.39" y2="91.71" stroke="#555" stroke-width="0.95"/><line x1="47.50" y1="86.00" x2="47.50" y2="93.80" stroke="#111" stroke-width="1.15"/><line x1="57.85" y1="85.14" x2="59.61" y2="91.71" stroke="#555" stroke-width="0.95"/><line x1="67.50" y1="81.14" x2="70.90" y2="87.03" stroke="#555" stroke-width="0.95"/><line x1="75.43" y1="74.43" x2="80.95" y2="79.95" stroke="#111" stroke-width="1.15"/><line x1="82.14" y1="66.50" x2="88.03" y2="69.90" stroke="#555" stroke-width="0.95"/><line x1="86.14" y1="56.85" x2="92.71" y2="58.61" stroke="#555" stroke-width="0.95"/><line x1="47.5" y1="46.5" x2="68.50" y2="10.13" stroke="#000" stroke-width="1.05"/><circle cx="68.50" cy="10.13" r="2.3" fill="#fff" stroke="#000" stroke-width="1"/></svg>
<div class="a" style="left:583px;top:279px;width:84px;height:26px;background:#fff;border:1px solid #e0e0e0;border-bottom:1px solid #8a8a8a"></div>
<div class="t" style="left:586px;top:281px;font-size:15.5px;letter-spacing:-0.8px;line-height:22px">60°</div>
<div class="a" style="left:646px;top:281px;width:19px;height:11px;background:#fdfdfd;border:1px solid #dcdcdc"></div>
<div class="a" style="left:646px;top:292px;width:19px;height:11px;background:#fdfdfd;border:1px solid #dcdcdc"></div>
<svg class="a" style="left:646px;top:281px" width="19" height="22"><path d="M6.1 7h6.9l-3.45-4z" fill="#111"/><path d="M6.1 15h6.9l-3.45 4z" fill="#111"/></svg>
<div class="t" style="left:679px;top:281px;font-size:15.5px;letter-spacing:-0.6px;line-height:22px">Degrees</div>
<div class="t" style="left:464px;top:346px;font-size:15.5px;letter-spacing:-0.45px;font-weight:bold;line-height:22px">Plot Options</div>
<div class="a" style="left:476px;top:375px;width:13px;height:13px;border:1px solid #5a5a5a;border-radius:3px;background:#efefef"></div>
<div class="a" style="left:492px;top:372px;width:216px;height:20px;border:1px dotted #333"></div>
<div class="t" style="left:493px;top:372px;font-size:15.5px;letter-spacing:-0.25px;line-height:22px">Include values from hidden cells</div>
</body></html>
